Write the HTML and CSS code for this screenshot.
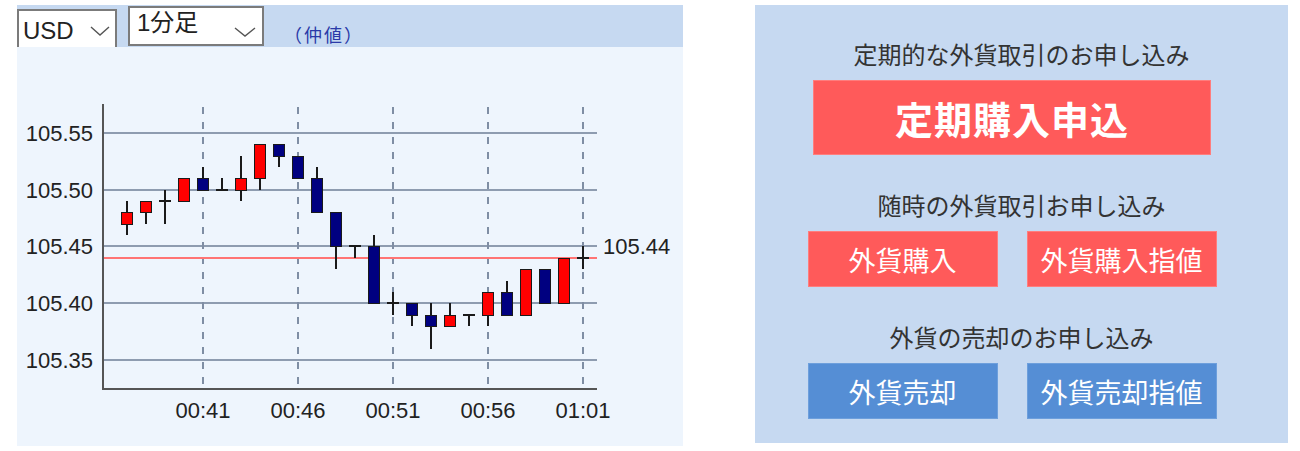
FILE: index.html
```html
<!DOCTYPE html>
<html lang="ja">
<head>
    <meta charset="UTF-8">
    <meta name="viewport" content="width=device-width, initial-scale=1.0">
    <title>外貨チャート</title>
    <link rel="stylesheet" href="styles.css">
</head>
<body>
    <div id="page">

        <div id="chartPanel">
            <div id="chartHead">
                <div class="pick pickCur">
                    <span>USD</span>
                    <svg class="chev" width="20" height="10" viewBox="0 0 20 10"><path d="M1 1 L10 9 L19 1"/></svg>
                </div>
                <div class="pick pickSpan">
                    <span>1分足</span>
                    <svg class="chev" width="22" height="10" viewBox="0 0 22 10"><path d="M1 1 L11 9 L21 1"/></svg>
                </div>
                <span id="midRate">（仲値）</span>
            </div>
            <div id="chartBody">
                <svg id="chart" width="666" height="399" viewBox="17 47 666 399"></svg>
            </div>
        </div>

        <div id="orderPanel">
            <p class="orderTitle">定期的な外貨取引のお申し込み</p>
            <div class="btnRow">
                <a class="btn buy big">定期購入申込</a>
            </div>
            <p class="orderTitle">随時の外貨取引お申し込み</p>
            <div class="btnRow">
                <a class="btn buy">外貨購入</a>
                <a class="btn buy">外貨購入指値</a>
            </div>
            <p class="orderTitle">外貨の売却のお申し込み</p>
            <div class="btnRow">
                <a class="btn sell">外貨売却</a>
                <a class="btn sell">外貨売却指値</a>
            </div>
        </div>

    </div>

    <!-- chart -->
    <script>
        var NS = 'http://www.w3.org/2000/svg';
        var chart = document.getElementById('chart');

        // [open, close, high, low] per minute from 00:37
        var bars = [
            [105.47,105.48,105.49,105.46],
            [105.48,105.49,105.49,105.47],
            [105.49,105.49,105.50,105.47],
            [105.49,105.51,105.51,105.49],
            [105.51,105.50,105.52,105.50],
            [105.50,105.50,105.51,105.50],
            [105.50,105.51,105.53,105.49],
            [105.51,105.54,105.54,105.50],
            [105.54,105.53,105.54,105.52],
            [105.53,105.51,105.53,105.51],
            [105.51,105.48,105.52,105.48],
            [105.48,105.45,105.48,105.43],
            [105.45,105.45,105.45,105.44],
            [105.45,105.40,105.46,105.40],
            [105.40,105.40,105.41,105.39],
            [105.40,105.39,105.40,105.38],
            [105.39,105.38,105.40,105.36],
            [105.38,105.39,105.40,105.38],
            [105.39,105.39,105.39,105.38],
            [105.39,105.41,105.41,105.38],
            [105.41,105.39,105.42,105.39],
            [105.39,105.43,105.43,105.39],
            [105.43,105.40,105.43,105.40],
            [105.40,105.44,105.44,105.40],
            [105.44,105.44,105.45,105.43]
        ];

        function py(p){
            return Math.round(133 + (105.55 - p) * 1135);
        }

        function add(tag, attrs, text){
            var el = document.createElementNS(NS, tag);
            for(var k in attrs){
                el.setAttribute(k, attrs[k]);
            }
            if(text) el.textContent = text;
            chart.appendChild(el);
            return el;
        }

        // horizontal grid + price labels
        var levels = [105.55, 105.50, 105.45, 105.40, 105.35];
        for(var i = 0; i < levels.length; i++){
            var y = py(levels[i]);
            add('line', {x1: 104, y1: y, x2: 597, y2: y, 'class': 'grid'});
            add('text', {x: 93, y: y + 8, 'class': 'lbl', 'text-anchor': 'end'}, levels[i].toFixed(2));
        }

        // time lines
        var times = ['00:41','00:46','00:51','00:56','01:01'];
        for(var i = 0; i < times.length; i++){
            var x = 203 + 95 * i;
            add('line', {x1: x, y1: 107, x2: x, y2: 388, 'class': 'tick'});
            add('text', {x: x, y: 418, 'class': 'lbl', 'text-anchor': 'middle'}, times[i]);
        }

        // current rate
        add('line', {x1: 104, y1: py(105.44), x2: 597, y2: py(105.44), 'class': 'now'});
        add('text', {x: 603, y: py(105.45) + 8, 'class': 'lbl'}, '105.44');

        add('path', {d: 'M103 104 V389 H597', 'class': 'axis'});

        for(var i = 0; i < bars.length; i++){
            var b = bars[i];
            var x = 127 + 19 * i;
            add('line', {x1: x, y1: py(b[2]), x2: x, y2: py(b[3]), 'class': 'wick'});
            if(b[0] == b[1]){
                add('line', {x1: x - 6, y1: py(b[0]), x2: x + 6, y2: py(b[0]), 'class': 'wick'});
            }
            else{
                var bodyTop = py(Math.max(b[0], b[1]));
                var bodyBot = py(Math.min(b[0], b[1]));
                add('rect', {x: x - 5.5, y: bodyTop + 0.5, width: 11, height: bodyBot - bodyTop, 'class': b[1] > b[0] ? 'up' : 'down'});
            }
        }
    </script>

</body>
</html>
```

FILE: styles.css
```css
*{
    margin: 0;
    padding: 0;
    box-sizing: border-box;
}

body{
    background: #fff;
    font-family: "Noto Sans CJK JP", sans-serif;
    color: #333;
}

#page{
    display: flex;
    align-items: flex-start;
    gap: 72px;
    padding: 5px 0 0 17px;
}

/* chart */

#chartPanel{
    width: 666px;
    height: 441px;
    display: flex;
    flex-direction: column;
}

#chartHead{
    height: 42px;
    background: #c6d9f1;
    display: flex;
    align-items: flex-start;
}

.pick{
    background: #fff;
    border: 2px solid #7b7b7b;
    display: flex;
    justify-content: space-between;
    color: #222;
    font-family: "Liberation Sans", "Noto Sans CJK JP", sans-serif;
    font-size: 24px;
}

.pick .chev{
    fill: none;
    stroke: #555;
    stroke-width: 1.4;
}

.pickCur{
    width: 100px;
    height: 38px;
    margin-top: 4px;
    border-bottom: none;
    align-items: center;
    padding: 4px 5px 0 4px;
}

.pickSpan{
    width: 136px;
    height: 40px;
    margin: 1px 0 0 11px;
    padding: 0 6px 0 7px;
}

.pickSpan span{
    line-height: 30px;
}

.pickSpan .chev{
    margin-top: 19px;
}

#midRate{
    align-self: flex-end;
    margin: 0 0 1px 20px;
    color: #2a3aa8;
    font-size: 18px;
    letter-spacing: 2px;
    line-height: 24px;
}

#chartBody{
    flex: 1;
    background: #eef5fd;
}

#chart{
    display: block;
}

#chart .grid{
    stroke: #8e9cb0;
    stroke-width: 2;
}

#chart .tick{
    stroke: #7f8ea4;
    stroke-width: 2;
    stroke-dasharray: 7 8;
}

#chart .axis{
    fill: none;
    stroke: #555;
    stroke-width: 2;
}

#chart .now{
    stroke: #ff7474;
    stroke-width: 2;
}

#chart .lbl{
    font-family: "Liberation Sans", sans-serif;
    font-size: 22px;
    fill: #222;
}

#chart .wick{
    stroke: #1a1a1a;
    stroke-width: 2;
}

#chart .up{
    fill: #ff0000;
    stroke: #1a1a1a;
    stroke-width: 1;
}

#chart .down{
    fill: #000080;
    stroke: #1a1a1a;
    stroke-width: 1;
}

/* order buttons */

#orderPanel{
    width: 533px;
    height: 438px;
    background: #c6d9f1;
    display: flex;
    flex-direction: column;
    align-items: center;
    padding-top: 34px;
}

.orderTitle{
    font-size: 24px;
    line-height: 30px;
    color: #333;
}

.btnRow{
    display: flex;
    gap: 29px;
    margin: 11px 19px 35px 0;
}

.btn{
    display: flex;
    align-items: center;
    justify-content: center;
    width: 190px;
    height: 56px;
    color: #fff;
    font-size: 27px;
    cursor: pointer;
}

.btn.big{
    width: 398px;
    height: 75px;
    font-size: 38px;
    font-weight: bold;
    letter-spacing: 1px;
}

.buy{
    background: #ff5a5a;
    border: 1px solid #ff7d7d;
}

.sell{
    background: #558ed5;
    border: 1px solid #6d9fdc;
}
```
